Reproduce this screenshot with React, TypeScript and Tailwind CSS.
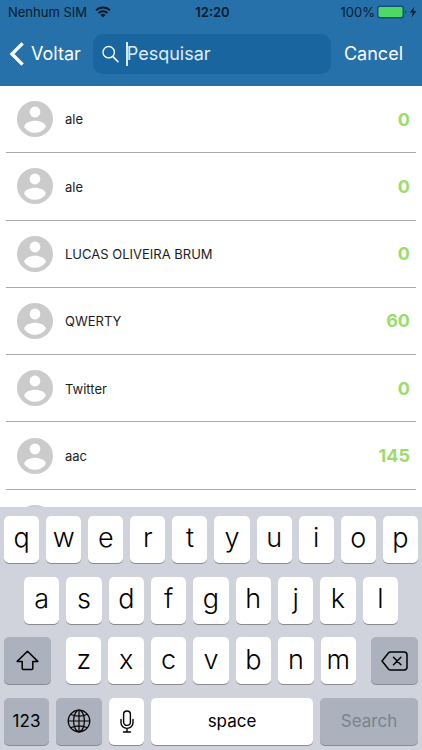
import type { ReactNode } from "react";

const contacts = [
  { name: "ale", score: 0 },
  { name: "ale", score: 0 },
  { name: "LUCAS OLIVEIRA BRUM", score: 0 },
  { name: "QWERTY", score: 60 },
  { name: "Twitter", score: 0 },
  { name: "aac", score: 145 },
  { name: "", score: null },
];

function StatusBar() {
  return (
    <div className="grid h-6 grid-cols-3 items-center pl-2 pr-[5px] text-[13px] leading-4 text-[#041b2e]">
      <div className="flex items-center gap-2">
        <span className="whitespace-nowrap">Nenhum SIM</span>
        <svg width="16" height="12" viewBox="0 0 16 12" fill="none" aria-hidden="true">
          <path d="M1 4.4a10 10 0 0 1 14 0" stroke="#041b2e" strokeWidth="2" />
          <path d="M3.5 7a6.4 6.4 0 0 1 9 0" stroke="#041b2e" strokeWidth="2" />
          <path d="M8 11.6 5.4 9a3.7 3.7 0 0 1 5.2 0z" fill="#041b2e" />
        </svg>
      </div>
      <span className="text-center font-semibold">12:20</span>
      <div className="flex items-center justify-end gap-[2px]">
        <span>100%</span>
        <svg width="40" height="14" viewBox="0 0 40 14" aria-hidden="true">
          <rect x="0" y="0.500" width="27" height="13" rx="3" fill="#15507f" />
          <rect x="1.500" y="2" width="24" height="10" rx="1.400" fill="#4cd964" />
          <path d="M28 5c1.600.6 1.600 3.400 0 4z" fill="#15507f" />
          <path d="M37.300 1.800 32.800 7.600h2.900L34.600 12.400l4.700-6.200h-2.900z" fill="#041b2e" />
        </svg>
      </div>
    </div>
  );
}

function SearchHeader() {
  return (
    <header className="h-[86px] shrink-0 bg-[#2671aa]">
      <StatusBar />
      <div className="flex items-center pl-[9px] pr-[19px] pt-[10px] text-[18px] leading-6 text-white">
        <button type="button" className="flex items-center gap-[7px]">
          <svg width="15" height="24" viewBox="0 0 15 24" fill="none" aria-hidden="true">
            <path d="M13.6 1.4 3 12l10.6 10.6" stroke="white" strokeWidth="3.4" />
          </svg>
          <span>Voltar</span>
        </button>
        <div className="relative ml-3 flex h-10 flex-1 items-center gap-2 rounded-[10px] bg-[#1865a0] pl-[9px]">
          <svg width="17" height="18" viewBox="0 0 17 18" fill="none" stroke="white" aria-hidden="true">
            <circle cx="6.7" cy="7.2" r="5.7" strokeWidth="1.3" />
            <path d="m10.9 11.6 5 5" strokeWidth="1.6" strokeLinecap="round" />
          </svg>
          <input
            type="text"
            aria-label="Pesquisar"
            placeholder="Pesquisar"
            className="w-0 flex-1 bg-transparent outline-none placeholder:text-[#e0eef8] placeholder:opacity-100"
          />
          <span className="absolute left-[33px] top-2 h-6 w-[2px] bg-[#d8e9f5]" />
        </div>
        <button type="button" className="ml-[13px]">Cancel</button>
      </div>
    </header>
  );
}

function Avatar() {
  return (
    <svg width="36" height="36" viewBox="0 0 36 36" className="shrink-0" aria-hidden="true">
      <circle cx="18" cy="18" r="18" fill="#cbcbcb" />
      <circle cx="18" cy="11" r="5.4" fill="white" />
      <path d="M7.2 26c0-4 6.2-6.200 10.800-6.200s10.800 2.200 10.800 6.200c-2.400 3.600-6.200 5.800-10.800 5.800S9.600 29.600 7.200 26z" fill="white" />
    </svg>
  );
}

function ContactList() {
  return (
    <main className="min-h-0 flex-1 overflow-hidden px-[6px]">
      <ul className="grid h-[471px] grid-rows-7">
        {contacts.map((contact, index) => (
          <li key={index} className="flex items-center gap-3 border-b border-[#a9a9a9] pl-[11px] pr-[6px]">
            <Avatar />
            <span className="flex-1 pt-[2px] text-[13px] text-[#1c1c1c]">{contact.name}</span>
            <span className="text-[18px] font-bold text-[#9bdc6c]">{contact.score}</span>
          </li>
        ))}
      </ul>
    </main>
  );
}

type KeyProps = { children: ReactNode; label?: string; className: string };

function Key({ children, label, className }: KeyProps) {
  return (
    <button
      type="button"
      aria-label={label}
      className={`flex h-[47px] items-center justify-center rounded-[5px] shadow-[0_1px_0_#898b8f] ${className}`}
    >
      {children}
    </button>
  );
}

function LetterKeys({ letters }: { letters: string }) {
  return (
    <>
      {letters.split("").map((letter) => (
        <Key key={letter} className="w-0 flex-1 bg-white pb-[2px] text-[27px] font-light">
          {letter}
        </Key>
      ))}
    </>
  );
}

function Keyboard() {
  return (
    <section
      aria-label="Keyboard"
      className="flex h-[243px] shrink-0 flex-col justify-between bg-[#d0d3db] px-1 pb-[5px] pt-[9px] text-black"
    >
      <div className="flex gap-[7px]">
        <LetterKeys letters="qwertyuiop" />
      </div>
      <div className="flex gap-[7px] px-5">
        <LetterKeys letters="asdfghjkl" />
      </div>
      <div className="flex gap-[15px]">
        <Key label="Shift" className="w-[47px] bg-[#abb2bd]">
          <svg width="23" height="21" viewBox="0 0 23 21" fill="none" stroke="black" strokeWidth="1.5" strokeLinejoin="round" aria-hidden="true">
            <path d="M11.5 1.200 1.200 11.400h5v7q0 1 1 1h8.600q1 0 1-1v-7h5z" />
          </svg>
        </Key>
        <div className="flex flex-1 gap-[7px]">
          <LetterKeys letters="zxcvbnm" />
        </div>
        <Key label="Delete" className="w-[47px] bg-[#abb2bd]">
          <svg width="27" height="20" viewBox="0 0 27 20" fill="none" stroke="black" strokeWidth="1.5" strokeLinecap="round" strokeLinejoin="round" aria-hidden="true">
            <path d="M9.300 1h13.700q3 0 3 3v12q0 3-3 3H9.300q-1 0-1.700-.8L1 10l6.600-8.200Q8.300 1 9.300 1z" />
            <path d="m12.500 6.200 7.400 7.600m0-7.600-7.400 7.600" />
          </svg>
        </Key>
      </div>
      <div className="flex gap-[7px]">
        <Key className="w-[45px] bg-[#abb2bd] text-[17px]">123</Key>
        <Key label="Next keyboard" className="w-[46px] bg-[#abb2bd]">
          <svg width="24" height="24" viewBox="0 0 24 24" fill="none" stroke="black" strokeWidth="1.200" aria-hidden="true">
            <circle cx="12" cy="12" r="10.800" />
            <ellipse cx="12" cy="12" rx="5.400" ry="10.800" />
            <path d="M12 1v22M1 12h22M3.600 5.200q8.400 4 16.800 0M3.600 18.800q8.400-4 16.800 0" />
          </svg>
        </Key>
        <Key label="Dictate" className="w-[35px] bg-white">
          <svg width="14" height="23" viewBox="0 0 14 23" fill="none" stroke="black" strokeWidth="1.400" strokeLinecap="round" aria-hidden="true">
            <rect x="3.600" y="1" width="6.800" height="14.400" rx="3.400" />
            <path d="M1 9.500v3.300a6 5.600 0 0 0 12 0V9.500M7 18.500V22M3.500 22h7" />
          </svg>
        </Key>
        <Key className="flex-1 bg-white text-[17px]">space</Key>
        <Key className="w-[98px] bg-[#abb2bd] text-[17px] text-[#7c828b]">Search</Key>
      </div>
    </section>
  );
}

export default function App() {
  return (
    <div className="flex h-screen flex-col overflow-hidden bg-white font-['Inter','Liberation_Sans',sans-serif]">
      <SearchHeader />
      <ContactList />
      <Keyboard />
    </div>
  );
}
